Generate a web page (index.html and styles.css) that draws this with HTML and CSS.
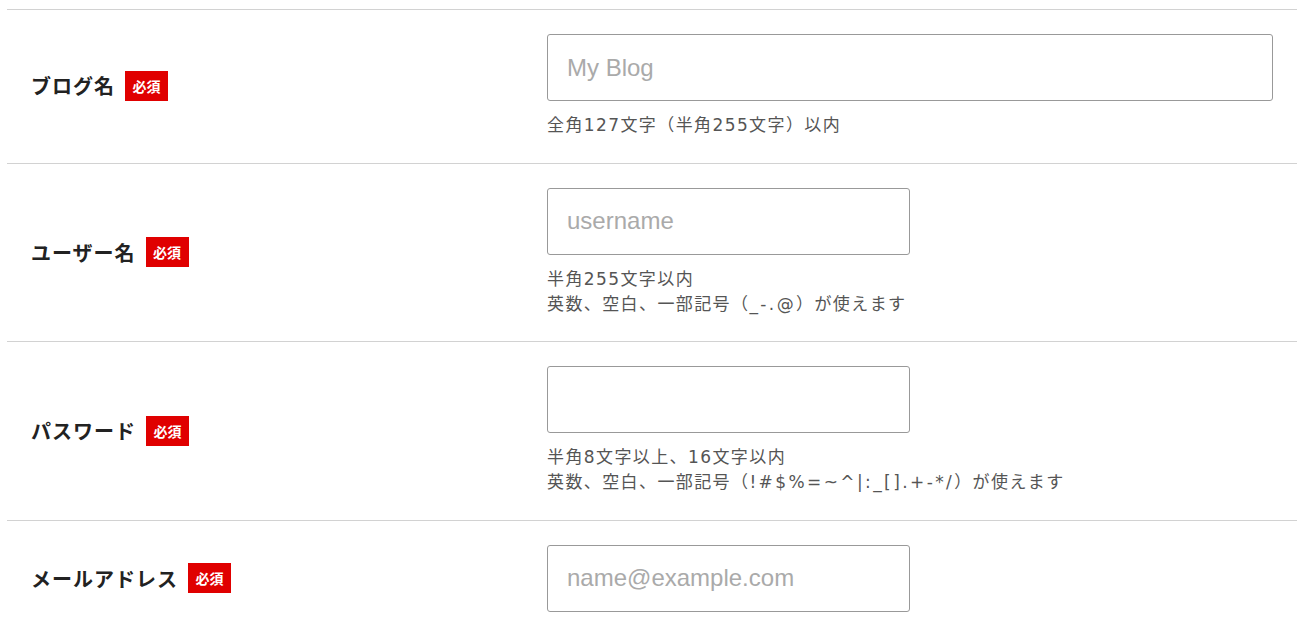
FILE: index.html
```html
<!DOCTYPE html>
<html lang="ja">
<head>
<meta charset="utf-8">
<link rel="stylesheet" href="styles.css">
</head>
<body>
<div class="form">
  <div class="row">
    <div class="label"><span class="label-text">ブログ名</span><span class="badge">必須</span></div>
    <div class="field">
      <input class="input input-wide" type="text" placeholder="My Blog">
      <p class="help">全角127文字（半角255文字）以内</p>
    </div>
  </div>
  <div class="row">
    <div class="label"><span class="label-text">ユーザー名</span><span class="badge">必須</span></div>
    <div class="field">
      <input class="input" type="text" placeholder="username">
      <p class="help">半角255文字以内<br>英数、空白、一部記号（<span class="sym">_-.@</span>）が使えます</p>
    </div>
  </div>
  <div class="row">
    <div class="label"><span class="label-text">パスワード</span><span class="badge">必須</span></div>
    <div class="field">
      <input class="input" type="password">
      <p class="help">半角8文字以上、16文字以内<br>英数、空白、一部記号（<span class="sym">!#$%=~^|:_[].+-*/</span>）が使えます</p>
    </div>
  </div>
  <div class="row">
    <div class="label"><span class="label-text">メールアドレス</span><span class="badge">必須</span></div>
    <div class="field">
      <input class="input" type="text" placeholder="name@example.com">
    </div>
  </div>
</div>
</body>
</html>
```
FILE: styles.css
```css
html, body {
  margin: 0;
  padding: 0;
  background: #fff;
}
body {
  font-family: "Noto Sans CJK JP", "Noto Sans", sans-serif;
  color: #222;
}
.form {
  margin: 9px 2px 0 7px;
}
.row {
  display: flex;
  border-top: 1px solid #d2d2d2;
  padding: 24px 24px 25px 0;
}
.label {
  width: 540px;
  flex: none;
  display: flex;
  align-items: center;
  padding-left: 24px;
  box-sizing: border-box;
}
.label-text {
  font-size: 20px;
  font-weight: bold;
  color: #222;
  letter-spacing: 1px;
}
.badge {
  display: inline-flex;
  align-items: center;
  justify-content: center;
  margin-left: 10px;
  width: 43px;
  height: 30px;
  background: #e00000;
  color: #fff;
  font-size: 14px;
  font-weight: bold;
}
.field {
  flex: 1;
  display: flex;
  flex-direction: column;
  align-items: flex-start;
}
.input {
  box-sizing: border-box;
  width: 363px;
  height: 67px;
  border: 1px solid #999;
  border-radius: 3px;
  padding: 0 19px;
  font-family: "Liberation Sans", Arial, sans-serif;
  font-size: 24px;
  color: #333;
  margin: 0;
  outline: none;
}
.input-wide {
  width: 100%;
}
.input::placeholder {
  color: #aaa;
}
.help {
  margin: 12px 0 0;
  font-family: "DejaVu Sans", "Noto Sans CJK JP", sans-serif;
  font-size: 17px;
  letter-spacing: 1.4px;
  line-height: 24.75px;
  color: #555;
}
.sym {
  letter-spacing: 2.4px;
}
```
